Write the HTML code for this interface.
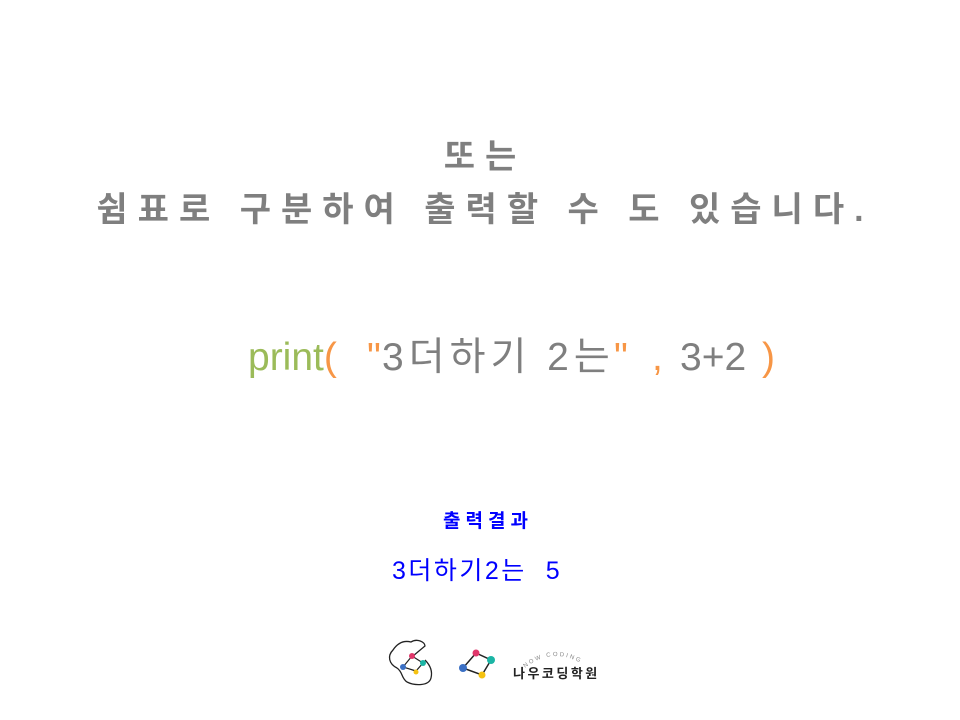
<!DOCTYPE html>
<html><head><meta charset="utf-8"><style>
body{margin:0;width:960px;height:720px;background:#fff;position:relative;overflow:hidden;font-family:"Liberation Sans","Noto Sans CJK KR",sans-serif;}
.a{position:absolute;white-space:nowrap;line-height:1;}
.h{color:#7f7f7f;font-weight:bold;font-size:34px;letter-spacing:10px;left:5px;width:960px;text-align:center;}
.c{font-size:39px;color:#7f7f7f;}
.o{color:#f79646}
</style></head><body>
<div class="a h" style="top:140px;">또는</div>
<div class="a h" style="top:193px;">쉼표로 구분하여 출력할 수 도 있습니다.</div>
<div class="a c" style="left:248px;top:338px;"><span style="color:#9bbb59">print</span><span class="o">(</span></div>
<div class="a c o" style="left:367px;top:338px;">"</div>
<div class="a c" style="left:382px;top:338px;letter-spacing:5px">3더하기 2는</div>
<div class="a c o" style="left:614px;top:338px;">"</div>
<div class="a c o" style="left:652px;top:338px;">,</div>
<div class="a c" style="left:680px;top:338px;">3+2</div>
<div class="a c o" style="left:762px;top:338px;">)</div>
<div class="a" style="left:443px;top:512px;font-size:19px;font-weight:bold;color:#0000ff;letter-spacing:5px;">출력결과</div>
<div class="a" style="left:392px;top:559px;font-size:25px;color:#0000ff;letter-spacing:2.5px">3더하기2는&nbsp; 5</div>
<svg class="a" style="left:385px;top:636px" width="220" height="56" viewBox="0 0 220 56">
<path d="M12 32 C4 28 2 20 8 14 C12 8 18 4 26 6 C32 2 40 6 40 10 L28 20 M12 32 C18 36 16 42 22 46 C30 50 44 50 46 42 C48 34 44 28 40 24" fill="none" stroke="#222" stroke-width="1.3"/>
<path d="M18 31 L27 20 L38 27 L31 35 Z" fill="none" stroke="#222" stroke-width="1.2"/>
<circle cx="27" cy="20" r="3" fill="#e0366a"/><circle cx="38" cy="27" r="3" fill="#1bb5a5"/><circle cx="18" cy="31" r="3" fill="#3a6fc4"/><circle cx="31" cy="36" r="2.5" fill="#f5c211"/>
<path d="M78 32 L91 17 L106 24 L97 39 Z" fill="none" stroke="#222" stroke-width="1.5"/>
<circle cx="91" cy="17" r="3.5" fill="#e0366a"/><circle cx="106" cy="24" r="4" fill="#1bb5a5"/><circle cx="78" cy="32" r="4" fill="#3a6fc4"/><circle cx="97" cy="39" r="3.5" fill="#f5c211"/>
<path id="arc" d="M140 32 Q170 8 204 32" fill="none"/>
<text font-size="6" fill="#888" letter-spacing="2" font-family="Liberation Sans"><textPath href="#arc">NOW CODING</textPath></text>
<text x="128" y="42" font-size="13" font-weight="bold" fill="#222" letter-spacing="2.5" font-family="Noto Sans CJK KR,sans-serif">나우코딩학원</text>
</svg>
</body></html>
